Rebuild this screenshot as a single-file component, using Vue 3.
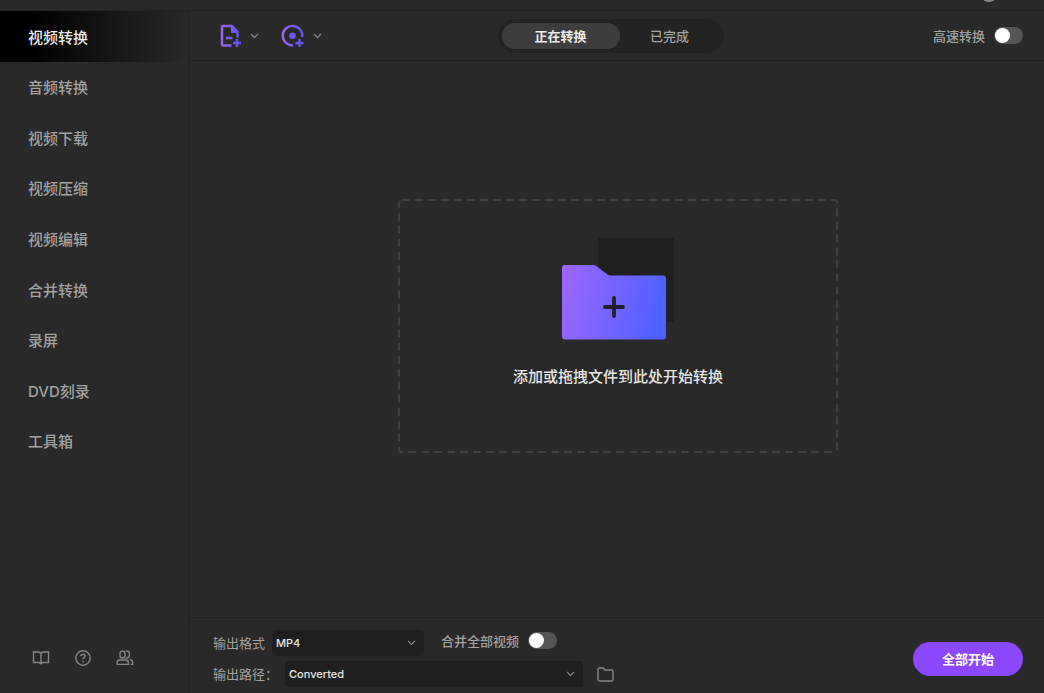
<template>
  <div class="app">
    <header class="titlebar">
      <span class="avatar"></span>
    </header>
    <div class="body">
      <aside class="sidebar">
        <nav class="menu">
          <a
            v-for="item in menu"
            :key="item"
            href="#"
            class="menu-item"
            :class="{ active: item === current }"
            @click.prevent="current = item"
          >{{ item }}</a>
        </nav>
        <div class="tools">
          <button type="button" class="icon-btn" aria-label="使用指南">
            <svg width="18" height="16" viewBox="0 0 18 16" fill="none" stroke="currentColor" stroke-width="1.4">
              <path d="M9 3.2C8 2.3 7 2 5.8 2H1.5v10.5h4.7c1.2 0 2.1.4 2.8 1.2.7-.8 1.6-1.2 2.8-1.2h4.7V2h-4.3C11 2 10 2.3 9 3.2zM9 3.2v11.3" />
            </svg>
          </button>
          <button type="button" class="icon-btn" aria-label="帮助">
            <svg width="18" height="18" viewBox="0 0 18 18" fill="none" stroke="currentColor" stroke-width="1.4">
              <circle cx="9" cy="9" r="7.2" />
              <path d="M6.9 7.2c0-1.3.9-2 2.1-2s2.1.8 2.1 1.9c0 1.4-2.1 1.6-2.1 3.2M9 11.8v1.5" />
            </svg>
          </button>
          <button type="button" class="icon-btn" aria-label="社区">
            <svg width="18" height="16" viewBox="0 0 18 16" fill="none" stroke="currentColor" stroke-width="1.4">
              <rect x="4" y="1" width="5" height="7" rx="2.5" />
              <path d="M9.8 1.2c2-.6 3.600.5 3.600 2.300v2c0 1.800-1.600 2.900-3.600 2.300" />
              <path d="M3.800 10h5.900c1.600 0 2.600 1 2.600 2.400v2H1.200v-2C1.200 11 2.200 10 3.800 10zM13.800 9.600c1.800 0 2.800 1.200 2.800 2.600v2.200h-2.200" />
            </svg>
          </button>
        </div>
      </aside>

      <main class="main">
        <div class="toolbar">
          <div class="adders">
            <button type="button" class="add-btn" aria-label="添加文件">
              <svg width="22" height="24" viewBox="0 0 22 24" fill="none" stroke="url(#ink)" stroke-width="2.4">
                <defs>
                  <linearGradient id="ink" gradientUnits="userSpaceOnUse" x1="0" y1="0" x2="22" y2="0">
                    <stop offset="0" stop-color="#9a6af0" />
                    <stop offset="1" stop-color="#5f50f5" />
                  </linearGradient>
                </defs>
                <path d="M11.500 21.500H3.200c-.7 0-1.200-.5-1.200-1.200V3.200C2 2.500 2.500 2 3.200 2H12l5.500 6v5.500" />
                <path d="M11.500 1.500V8.500H18z" fill="url(#ink)" stroke-width="1" />
                <path d="M6 14h6.500M17 15v8M13 19h8" />
              </svg>
              <svg class="chevron" width="9" height="6" viewBox="0 0 9 6" fill="none" stroke="currentColor" stroke-width="1.3">
                <path d="M1 1l3.500 3.500L8 1" />
              </svg>
            </button>
            <button type="button" class="add-btn" aria-label="添加光盘">
              <svg width="24" height="24" viewBox="0 0 24 24" fill="none" stroke="url(#ink)" stroke-width="2.400">
                <path d="M12 21.500A9.800 9.800 0 1 1 21.300 13" />
                <circle cx="11.500" cy="11.700" r="3.300" fill="#6f58f4" stroke="none" />
                <path d="M18.500 15v8M14.500 19h8" />
              </svg>
              <svg class="chevron" width="9" height="6" viewBox="0 0 9 6" fill="none" stroke="currentColor" stroke-width="1.3">
                <path d="M1 1l3.500 3.500L8 1" />
              </svg>
            </button>
          </div>
          <div class="tabs">
            <button
              v-for="t in tabs"
              :key="t"
              type="button"
              class="tab"
              :class="{ active: t === tab }"
              @click="tab = t"
            >{{ t }}</button>
          </div>
          <label class="switch fast">
            <span>高速转换</span>
            <input v-model="fast" type="checkbox" />
          </label>
        </div>

        <section class="stage">
          <button type="button" class="drop">
            <svg class="outline" width="100%" height="100%">
              <rect class="dashes" x="1" y="1" rx="3" />
            </svg>
            <svg width="114" height="104" viewBox="0 0 114 104">
              <defs>
                <linearGradient id="folder" x1="0" y1="0" x2="1" y2="0.15">
                  <stop offset="0" stop-color="#a066ff" />
                  <stop offset="1" stop-color="#5061ff" />
                </linearGradient>
              </defs>
              <rect x="37" y="1" width="76" height="84" rx="2" fill="#202020" />
              <path d="M4 28h28q2 0 3.500 1.200l11 8.300q1.500 1 3.500 1h52q3 0 3 3v58q0 3-3 3H4q-3 0-3-3V31q0-3 3-3z" fill="url(#folder)" />
              <path d="M53 61v18M44 70h18" stroke="#202028" stroke-width="3.800" stroke-linecap="round" />
            </svg>
            <span class="hint">添加或拖拽文件到此处开始转换</span>
          </button>
        </section>

        <footer class="footer">
          <div class="options">
            <div class="row">
              <label for="format">输出格式</label>
              <div class="picker format">
                <select id="format" v-model="format">
                  <option>MP4</option>
                  <option>MOV</option>
                </select>
                <svg class="chevron" width="9" height="6" viewBox="0 0 9 6" fill="none" stroke="currentColor" stroke-width="1.2">
                  <path d="M1 1l3.500 3.500L8 1" />
                </svg>
              </div>
              <label class="switch merge">
                <span>合并全部视频</span>
                <input v-model="merge" type="checkbox" />
              </label>
            </div>
            <div class="row">
              <label for="path">输出路径：</label>
              <div class="picker path">
                <select id="path" v-model="path">
                  <option>Converted</option>
                </select>
                <svg class="chevron" width="9" height="6" viewBox="0 0 9 6" fill="none" stroke="currentColor" stroke-width="1.2">
                  <path d="M1 1l3.500 3.500L8 1" />
                </svg>
              </div>
              <button type="button" class="icon-btn" aria-label="打开文件夹">
                <svg width="17" height="15" viewBox="0 0 17 15" fill="none" stroke="currentColor" stroke-width="1.400">
                  <path d="M2.500 1h3.800l1.700 2h6.500c.8 0 1.500.7 1.500 1.500v8c0 .8-.7 1.500-1.500 1.500h-12C1.700 14 1 13.300 1 12.500v-10C1 1.700 1.700 1 2.500 1z" />
                </svg>
              </button>
            </div>
          </div>
          <button type="button" class="start">全部开始</button>
        </footer>
      </main>
    </div>
  </div>
</template>

<script setup>
import { ref } from 'vue'

const menu = ['视频转换', '音频转换', '视频下载', '视频压缩', '视频编辑', '合并转换', '录屏', 'DVD刻录', '工具箱']
const tabs = ['正在转换', '已完成']

const current = ref(menu[0])
const tab = ref(tabs[0])
const fast = ref(false)
const merge = ref(false)
const format = ref('MP4')
const path = ref('Converted')
</script>

<style>
body {
  margin: 0;
  background: #292929;
}
</style>

<style scoped>
.app {
  display: flex;
  flex-direction: column;
  min-height: 100vh;
  background: #292929;
  color: #a2a2a2;
  font-family: Inter, "Noto Sans CJK SC", sans-serif;
  font-size: 13px;
  line-height: 20px;
}
* {
  box-sizing: border-box;
}
button {
  padding: 0;
  border: 0;
  background: none;
  color: inherit;
  font: inherit;
  cursor: pointer;
}
svg {
  display: block;
}
.titlebar {
  display: flex;
  justify-content: flex-end;
  align-items: flex-end;
  height: 11px;
  padding: 0 46px 8px 0;
  border-bottom: 1px solid #232323;
  overflow: hidden;
}
.avatar {
  flex: none;
  width: 18px;
  height: 18px;
  border-radius: 50%;
  background: #8a8a8a;
}
.body {
  flex: 1;
  display: flex;
}
.sidebar {
  flex: none;
  display: flex;
  flex-direction: column;
  justify-content: space-between;
  width: 189px;
  border-right: 1px solid #222;
}
.menu {
  display: flex;
  flex-direction: column;
  min-height: 455px;
}
.menu-item {
  flex: 1;
  display: flex;
  align-items: center;
  padding: 3px 0 0 28px;
  color: #a2a2a2;
  font-size: 15px;
  font-weight: 500;
  text-decoration: none;
}
.menu-item.active {
  background: linear-gradient(90deg, #000 16%, #292929 100%);
  color: #ececec;
}
.tools {
  display: flex;
  align-items: center;
  gap: 24px;
  padding: 0 0 26px 32px;
}
.icon-btn {
  color: #858585;
}
.main {
  flex: 1;
  display: flex;
  flex-direction: column;
  min-width: 0;
}
.toolbar {
  display: grid;
  grid-template-columns: 1fr auto 1fr;
  align-items: center;
  height: 50px;
  padding: 0 21px 0 31px;
  border-bottom: 1px solid #212121;
}
.adders {
  display: flex;
  gap: 22px;
}
.add-btn {
  display: flex;
  align-items: center;
  gap: 8px;
}
.chevron {
  color: #858585;
}
.tabs {
  display: flex;
  margin-right: 22px;
  padding: 4px;
  border-radius: 18px;
  background: #232323;
}
.tab {
  width: 100px;
  height: 26px;
  border-radius: 13px;
  font-weight: 500;
}
.tab.active {
  width: 118px;
  background: #3d3d3d;
  color: #ececec;
  font-weight: 700;
}
.switch {
  display: flex;
  align-items: center;
  gap: 9px;
  font-weight: 500;
}
.fast {
  justify-self: end;
}
.merge {
  margin-bottom: 5px;
}
.switch input {
  appearance: none;
  width: 29px;
  height: 17px;
  margin: 0;
  padding: 1px;
  border-radius: 9px;
  background: #555;
}
.switch input::before {
  content: "";
  display: block;
  width: 15px;
  height: 15px;
  border-radius: 50%;
  background: #fff;
}
.switch input:checked {
  background: #8b48ff;
}
.switch input:checked::before {
  margin-left: auto;
}
.stage {
  flex: 1;
  display: flex;
  align-items: center;
  justify-content: center;
  padding: 0 0 27px 3px;
}
.drop {
  position: relative;
  display: flex;
  flex-direction: column;
  align-items: center;
  gap: 26px;
  width: 440px;
  height: 254px;
  padding-top: 38px;
}
.outline {
  position: absolute;
  inset: 0;
}
.dashes {
  width: calc(100% - 2px);
  height: calc(100% - 2px);
  fill: none;
  stroke: #404040;
  stroke-width: 2px;
  stroke-dasharray: 8 5;
}
.hint {
  color: #e6e6e6;
  font-size: 15px;
  font-weight: 500;
}
.footer {
  display: flex;
  align-items: center;
  justify-content: space-between;
  padding: 12px 21px 6px 24px;
  border-top: 1px solid #212121;
}
.options {
  display: flex;
  flex-direction: column;
  gap: 5px;
}
.row {
  display: flex;
  align-items: center;
}
.picker {
  display: flex;
  align-items: center;
  height: 26px;
  border-radius: 4px;
  background: #1f1f1f;
}
.picker select {
  appearance: none;
  flex: 1;
  height: 26px;
  padding: 0 4px;
  border: 0;
  background: none;
  color: #e6e6e6;
  font-family: inherit;
  font-size: 11px;
  font-weight: 500;
}
.picker .chevron {
  margin-right: 8px;
}
.format {
  width: 152px;
  margin: 0 17px 0 7px;
}
.path {
  width: 298px;
  margin: 0 14px 0 7px;
}
.start {
  width: 110px;
  height: 34px;
  border-radius: 17px;
  background: #8b48ff;
  color: #fff;
  font-weight: 700;
}
</style>
